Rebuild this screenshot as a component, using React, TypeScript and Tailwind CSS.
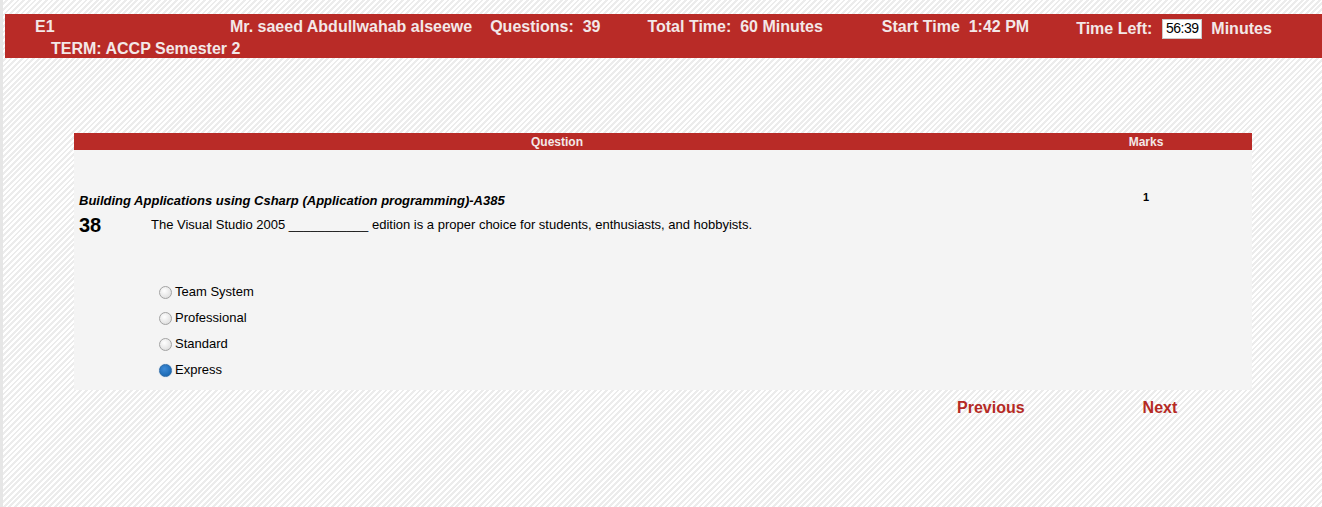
import React from 'react';

const options = ['Team System', 'Professional', 'Standard', 'Express'];

const Radio: React.FC<{ checked?: boolean }> = ({ checked }) =>
  checked ? (
    <span className="w-[13px] h-[13px] rounded-full border border-[#2b6aa8] bg-[radial-gradient(circle_at_40%_35%,#3d8ad6,#0f5ea8)] shadow-[0_0_1px_#7aa9d8]" />
  ) : (
    <span className="w-[13px] h-[13px] rounded-full border border-[#a3a3a3] bg-[radial-gradient(circle_at_40%_35%,#ffffff,#d6d6d6)]" />
  );

export default function App() {
  return (
    <div className="min-h-[507px] w-full bg-[repeating-linear-gradient(135deg,#ffffff_0px,#ffffff_2px,#ececec_2px,#ececec_4px)] pt-[14px] font-['Liberation_Sans',Arial,sans-serif] border-l-[3px] border-[#e6e6e6]">
      {/* header bar */}
      <div className="ml-[2px] h-[44px] bg-[#b92b27] text-[#f3e8e8] font-bold text-[16px]">
        <div className="flex items-center h-[24px] pt-[1px]">
          <span className="ml-[30px] w-[195px]">E1</span>
          <span>Mr. saeed Abdullwahab alseewe</span>
          <span className="ml-[18px] whitespace-pre">Questions:  39</span>
          <span className="ml-[47px] whitespace-pre">Total Time:  60 Minutes</span>
          <span className="ml-[59px] whitespace-pre">Start Time  1:42 PM</span>
          <span className="ml-[47px] mt-[4px] flex items-center">
            Time Left:
            <span className="ml-[10px] w-[40px] h-[20px] bg-white border border-[#c9c9c9] text-black font-normal text-[14px] tracking-[-0.5px] flex items-center justify-center">
              56:39
            </span>
            <span className="ml-[9px]">Minutes</span>
          </span>
        </div>
        <div className="ml-[46px] leading-[20px] pt-[1px]">TERM: ACCP Semester 2</div>
      </div>

      {/* question table */}
      <div className="mt-[75px] ml-[71px] w-[1178px]">
        <div className="grid grid-cols-[966px_212px] h-[17px] bg-[#b92b27] text-[#f3e8e8] font-bold text-[12px] leading-[18px] text-center">
          <div>Question</div>
          <div>Marks</div>
        </div>
        <div className="grid grid-cols-[966px_212px] bg-[#f4f4f4] h-[240px]">
          <div className="pt-[43px] pl-[5px]">
            <div className="text-[13px] font-bold italic leading-[16px] text-black">
              Building Applications using Csharp (Application programming)-A385
            </div>
            <div className="mt-[4px] flex items-center h-[24px]">
              <span className="w-[72px] text-[20px] font-bold leading-[24px]">38</span>
              <span className="text-[13px] text-black">
                The Visual Studio 2005 ___________ edition is a proper choice for students, enthusiasts, and hobbyists.
              </span>
            </div>
            <div className="mt-[42px] ml-[80px] flex flex-col">
              {options.map((o, i) => (
                <label key={o} className="flex items-center h-[26px] gap-[3px] text-[13px] text-black">
                  <Radio checked={i === 3} />
                  {o}
                </label>
              ))}
            </div>
          </div>
          <div className="pt-[39px] text-center text-[11px] font-bold">1</div>
        </div>
        <div className="flex pt-[9px] text-[16px] font-bold text-[#b52a24] leading-[18px]">
          <span className="ml-[883px]">Previous</span>
          <span className="ml-[118px]">Next</span>
        </div>
      </div>
    </div>
  );
}
